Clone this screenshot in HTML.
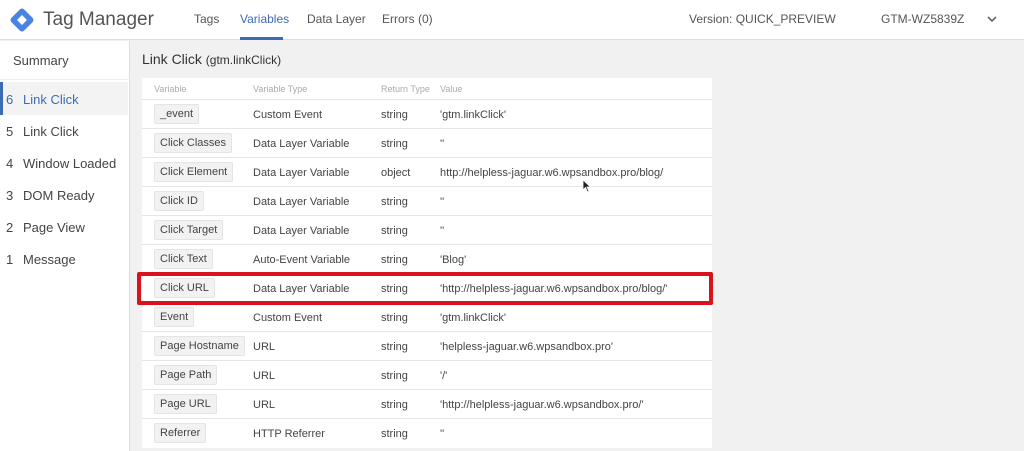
<!DOCTYPE html>
<html><head><meta charset="utf-8"><style>
*{margin:0;padding:0;box-sizing:border-box}
body{width:1024px;height:444px;overflow:hidden;background:#f1f1f1;font-family:"Liberation Sans",Arial,sans-serif;color:#333;position:relative}
.a{position:absolute;white-space:nowrap}
#hdr{position:absolute;left:0;top:0;width:1024px;height:40px;background:#fff;border-bottom:1px solid #ddd}
#side{position:absolute;left:0;top:41px;width:130px;height:410px;background:#fff;border-right:1px solid #ddd}
.nav{font-size:12px;color:#555}
.si{position:absolute;left:6px;font-size:13px;color:#444}
.si span{display:inline-block;width:17px}
#card{position:absolute;left:142px;top:78px;width:570px;height:370px;background:#fff}
.row{position:absolute;left:0;width:570px;height:29px;border-top:1px solid #e6e6e6;font-size:11px;color:#444}
.row div{position:absolute;top:9px}
.chip{position:absolute;left:12px;top:4px!important;height:20px;padding:3px 5px;background:#f2f2f2;border:1px solid #e4e4e4;border-radius:2px;font-size:11px;color:#444}
.th{position:absolute;top:6px;font-size:9px;color:#aaa}
</style></head><body>
<div id="hdr">
<svg class="a" style="left:8px;top:6px" width="28" height="28" viewBox="0 0 28 28"><rect x="5" y="5" width="18" height="18" rx="3" transform="rotate(45 14 14)" fill="#4a84e0"/><rect x="10.5" y="10.5" width="7" height="7" transform="rotate(45 14 14)" fill="#fff"/></svg>
<div class="a" style="left:43px;top:9px;font-size:19px;color:#555">Tag Manager</div>
<div class="a nav" style="left:194px;top:12px">Tags</div>
<div class="a nav" style="left:240px;top:12px;color:#3c6bb5">Variables</div>
<div class="a" style="left:240px;top:37px;width:43px;height:3px;background:#3c6bb5"></div>
<div class="a nav" style="left:307px;top:12px">Data Layer</div>
<div class="a nav" style="left:382px;top:12px">Errors (0)</div>
<div class="a nav" style="left:689px;top:12px">Version: QUICK_PREVIEW</div>
<div class="a nav" style="left:881px;top:12px">GTM-WZ5839Z</div>
<svg class="a" style="left:986px;top:15px" width="12" height="8" viewBox="0 0 12 8"><path d="M2 2 L6 6 L10 2" fill="none" stroke="#666" stroke-width="1.6"/></svg>
</div>
<div id="side">
<div class="a" style="left:13px;top:12px;font-size:13px;color:#444">Summary</div>
<div class="a" style="left:0;top:38px;width:130px;height:1px;background:#eee"></div>
<div class="a" style="left:0;top:41px;width:128px;height:33px;background:#f3f3f3;border-left:3px solid #3c6bb5"></div>
<div class="si" style="top:51px;color:#3c6bb5"><span>6</span>Link Click</div>
<div class="si" style="top:83px"><span>5</span>Link Click</div>
<div class="si" style="top:115px"><span>4</span>Window Loaded</div>
<div class="si" style="top:147px"><span>3</span>DOM Ready</div>
<div class="si" style="top:179px"><span>2</span>Page View</div>
<div class="si" style="top:211px"><span>1</span>Message</div>
</div>
<div class="a" style="left:142px;top:51px;font-size:14px;color:#333">Link Click <span style="font-size:12px">(gtm.linkClick)</span></div>
<div id="card">
<div class="th" style="left:12px">Variable</div>
<div class="th" style="left:111px">Variable Type</div>
<div class="th" style="left:239px">Return Type</div>
<div class="th" style="left:298px">Value</div>
<div class="row" style="top:21px"><div class="chip">_event</div><div style="left:111px">Custom Event</div><div style="left:239px">string</div><div style="left:298px">'gtm.linkClick'</div></div>
<div class="row" style="top:50px"><div class="chip">Click Classes</div><div style="left:111px">Data Layer Variable</div><div style="left:239px">string</div><div style="left:298px">''</div></div>
<div class="row" style="top:79px"><div class="chip">Click Element</div><div style="left:111px">Data Layer Variable</div><div style="left:239px">object</div><div style="left:298px">http://helpless-jaguar.w6.wpsandbox.pro/blog/</div></div>
<div class="row" style="top:108px"><div class="chip">Click ID</div><div style="left:111px">Data Layer Variable</div><div style="left:239px">string</div><div style="left:298px">''</div></div>
<div class="row" style="top:137px"><div class="chip">Click Target</div><div style="left:111px">Data Layer Variable</div><div style="left:239px">string</div><div style="left:298px">''</div></div>
<div class="row" style="top:166px"><div class="chip">Click Text</div><div style="left:111px">Auto-Event Variable</div><div style="left:239px">string</div><div style="left:298px">'Blog'</div></div>
<div class="row" style="top:195px"><div class="chip">Click URL</div><div style="left:111px">Data Layer Variable</div><div style="left:239px">string</div><div style="left:298px">'http://helpless-jaguar.w6.wpsandbox.pro/blog/'</div></div>
<div class="row" style="top:224px"><div class="chip">Event</div><div style="left:111px">Custom Event</div><div style="left:239px">string</div><div style="left:298px">'gtm.linkClick'</div></div>
<div class="row" style="top:253px"><div class="chip">Page Hostname</div><div style="left:111px">URL</div><div style="left:239px">string</div><div style="left:298px">'helpless-jaguar.w6.wpsandbox.pro'</div></div>
<div class="row" style="top:282px"><div class="chip">Page Path</div><div style="left:111px">URL</div><div style="left:239px">string</div><div style="left:298px">'/'</div></div>
<div class="row" style="top:311px"><div class="chip">Page URL</div><div style="left:111px">URL</div><div style="left:239px">string</div><div style="left:298px">'http://helpless-jaguar.w6.wpsandbox.pro/'</div></div>
<div class="row" style="top:340px"><div class="chip">Referrer</div><div style="left:111px">HTTP Referrer</div><div style="left:239px">string</div><div style="left:298px">''</div></div>
</div>
<div class="a" style="left:137px;top:272px;width:576px;height:33px;border:4px solid #d9121b;border-radius:2px"></div>
<svg class="a" style="left:582px;top:179px" width="10" height="14" viewBox="0 0 10 14"><path d="M1 1 L1 11 L3.5 8.5 L5.5 13 L7 12.3 L5 8 L8.5 8 Z" fill="#222" stroke="#fff" stroke-width="0.8"/></svg>
</body></html>
